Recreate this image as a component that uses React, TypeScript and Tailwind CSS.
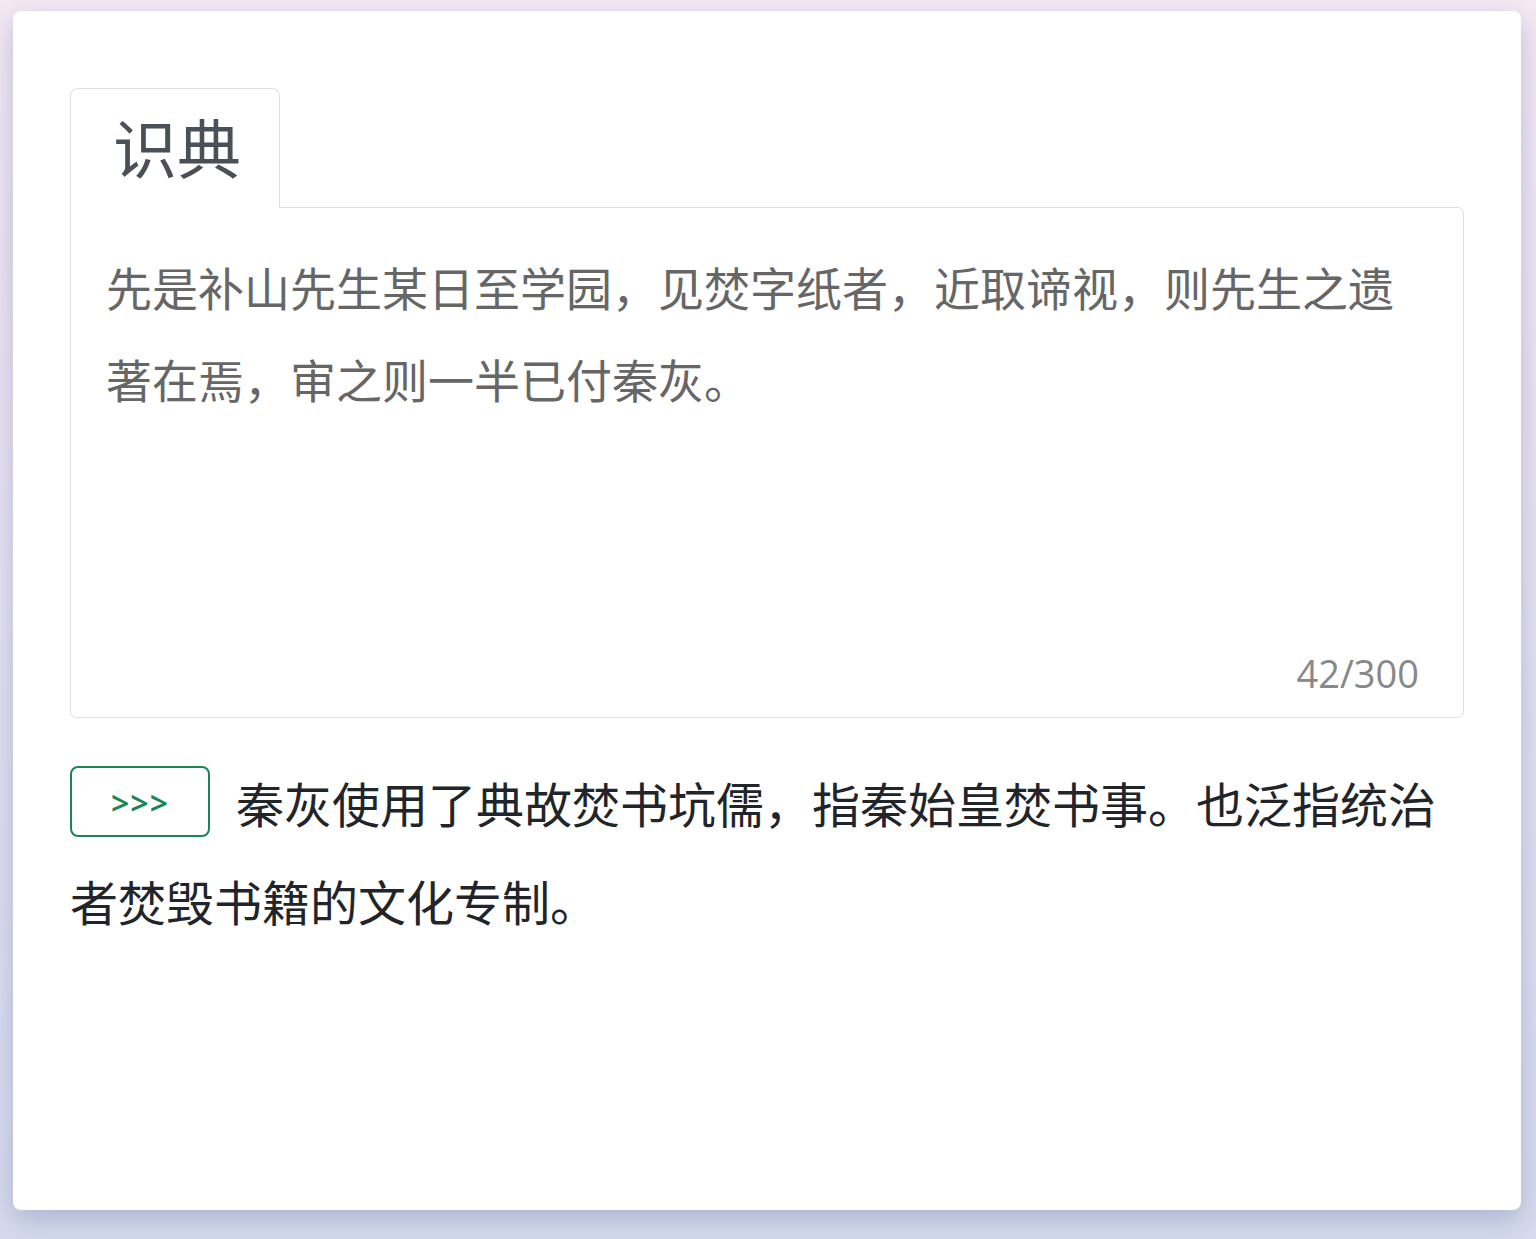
export default function App() {
  const source = "先是补山先生某日至学园，见焚字纸者，近取谛视，则先生之遗著在焉，审之则一半已付秦灰。";
  const note = "秦灰使用了典故焚书坑儒，指秦始皇焚书事。也泛指统治者焚毁书籍的文化专制。";

  return (
    <div
      className="min-h-screen bg-gradient-to-b from-[#f5e9f4] to-[#d6dbee] pl-[13px] pr-[15px] pt-[11px] pb-[29px]"
      style={{ fontFamily: '"Noto Sans", "Noto Sans CJK SC", sans-serif' }}
    >
      <div className="h-[1199px] rounded-[8px] bg-white px-[57px] pt-[77px] shadow-[0_10px_28px_rgba(110,120,160,0.4)]">
        {/* Tab */}
        <div className="relative z-10 -mb-px inline-block rounded-t-[8px] border border-b-0 border-[#dee2e6] bg-white pl-[42px] pr-[38px] pb-[16px] pt-[17px] text-[64px] leading-[86px] text-[#495057]">
          识典
        </div>

        {/* Text area */}
        <div className="relative flex h-[511px] flex-col justify-between rounded-[6px] rounded-tl-none border border-[#dee2e6] bg-white pl-[35px] pr-[44px] pb-[20px] pt-[34px]">
          <p className="text-[46px] leading-[92px] text-[#666666]">{source}</p>
          <div
            className="text-right text-[38px] leading-[48px] text-[#888888]"
            style={{ fontFamily: '"Open Sans", sans-serif' }}
          >
            {source.length}/300
          </div>
        </div>

        {/* Explanation */}
        <div className="mt-[38px] text-[48px] leading-[98px] text-[#212529]">
          <button className="mr-[26px] inline-flex h-[71px] w-[140px] items-center justify-center rounded-[8px] border-2 border-[#198754] pt-[4px] align-[8px] text-[32px] font-semibold leading-none tracking-[1px] text-[#198754]">
            &gt;&gt;&gt;
          </button>
          {note}
        </div>
      </div>
    </div>
  );
}
